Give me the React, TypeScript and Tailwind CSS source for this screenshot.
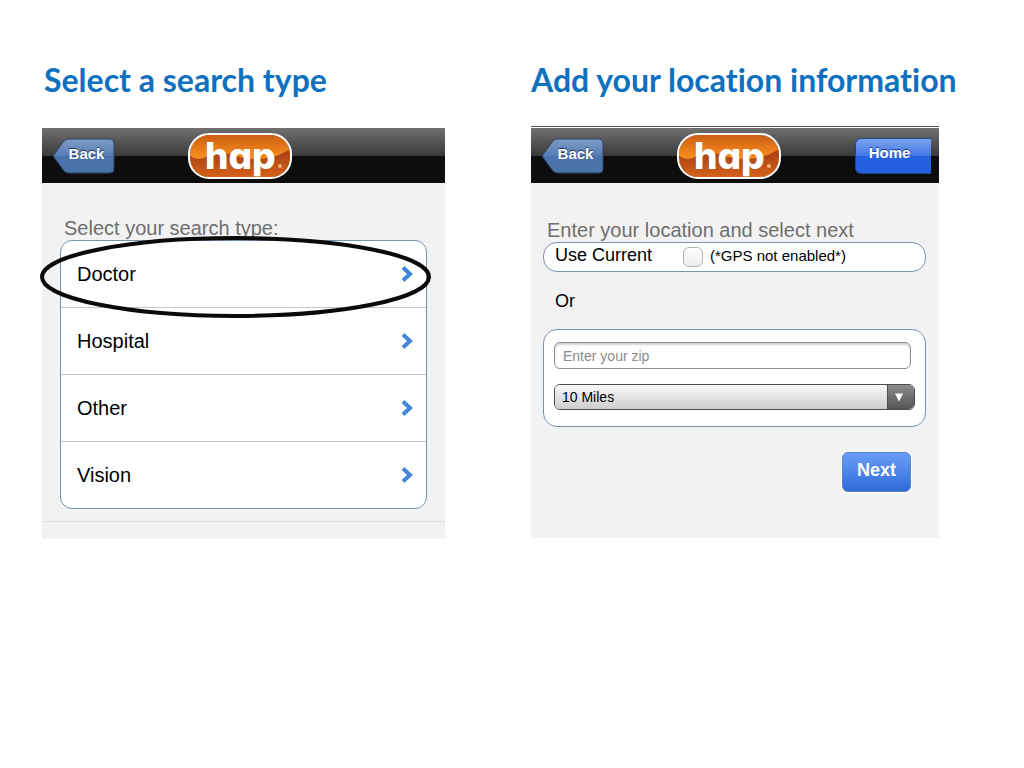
import React, { useId } from "react";

const searchTypes = ["Doctor", "Hospital", "Other", "Vision"];

const distances = ["10 Miles", "25 Miles", "50 Miles"];

const Logo = () => {
  const id = useId();

  return (
    <svg
      className="shrink-0 overflow-visible"
      width="104"
      height="46"
      viewBox="0 0 104 46"
      role="img"
      aria-label="hap"
    >
      <defs>
        <linearGradient id={`${id}-top`} x1="0" y1="0" x2="0" y2="1">
          <stop offset="0" stopColor="#c85a14" />
          <stop offset="0.5" stopColor="#f58a1c" />
          <stop offset="1" stopColor="#f58a1c" />
        </linearGradient>
        <linearGradient id={`${id}-bottom`} x1="0" y1="0" x2="0" y2="1">
          <stop offset="0" stopColor="#a03c14" />
          <stop offset="1" stopColor="#d9641a" />
        </linearGradient>
        <clipPath id={`${id}-clip`}>
          <rect x="2" y="2" width="100" height="42" rx="19" />
        </clipPath>
      </defs>
      <g clipPath={`url(#${id}-clip)`}>
        <rect width="104" height="46" fill={`url(#${id}-top)`} />
        <path
          d="M0 21Q9 30 20 23Q31 17 45 22Q62 28 80 25Q92 23 104 15V46H0Z"
          fill={`url(#${id}-bottom)`}
        />
      </g>
      <rect
        x="1"
        y="1"
        width="102"
        height="44"
        rx="20"
        fill="none"
        stroke="#ffffff"
        strokeWidth="2"
      />
      <text
        x="17"
        y="36"
        fontFamily="Inter, sans-serif"
        fontSize="37"
        fontWeight="800"
        fill="#ffffff"
        style={{ fontFeatureSettings: '"cv11"' }}
      >
        hap
      </text>
      <circle cx="92" cy="33" r="2" fill="#f0b070" />
    </svg>
  );
};

const BackButton = () => {
  const id = useId();

  return (
    <button
      type="button"
      className="relative h-9 w-[63px] shrink-0 pb-1 pl-[6px] text-center text-[15px] leading-8 font-bold text-white text-shadow-[0_-1px_1px_#1f3354]"
    >
      <svg
        className="absolute inset-0"
        width="63"
        height="36"
        viewBox="0 0 63 36"
        aria-hidden="true"
      >
        <defs>
          <linearGradient id={id} x1="0" y1="0" x2="0" y2="1">
            <stop offset="0" stopColor="#7f9cc6" />
            <stop offset="0.5" stopColor="#557cb3" />
            <stop offset="0.5" stopColor="#4a72ac" />
            <stop offset="1" stopColor="#4b72aa" />
          </linearGradient>
        </defs>
        <path
          d="M1 18L12 3Q14 1 17 1H58Q62 1 62 5V31Q62 35 58 35H17Q14 35 12 33Z"
          fill={`url(#${id})`}
          stroke="#2f4263"
          strokeWidth="1"
        />
      </svg>
      <span className="relative">Back</span>
    </button>
  );
};

const HeaderBar = ({ children }: { children?: React.ReactNode }) => (
  <header className="flex h-[55px] items-center gap-[73px] bg-[linear-gradient(#707070_0%,#3a3a3a_50%,#0d0d0d_50%,#0d0d0d_100%)] pr-2 pl-[10px]">
    <BackButton />
    <Logo />
    {children}
  </header>
);

const Chevron = () => (
  <svg width="12" height="16" viewBox="0 0 12 16" aria-hidden="true">
    <path d="M2 1.5L9 8L2 14.5" fill="none" stroke="#4285dc" strokeWidth="4" />
  </svg>
);

const SearchTypeScreen = () => (
  <div className="bg-[#f2f2f2]">
    <HeaderBar />
    <div className="px-[18px] pt-[33px] pb-3">
      <h2 className="px-1 text-[20px] leading-6 text-[#6e6e6e]">
        Select your search type:
      </h2>
      <div className="relative">
        <ul className="divide-y divide-[#c4c8cd] overflow-hidden rounded-xl border border-[#7d90b0] bg-white">
          {searchTypes.map((type) => (
            <li key={type}>
              <a
                href="#"
                className="flex h-[66px] items-center justify-between pr-[13px] pl-4 text-[20px] text-black"
              >
                {type}
                <Chevron />
              </a>
            </li>
          ))}
        </ul>
        {/* Highlight around the first option */}
        <svg
          className="pointer-events-none absolute -top-1 -left-5 h-[82px] w-[calc(100%+24px)]"
          viewBox="0 0 390 82"
          preserveAspectRatio="none"
          aria-hidden="true"
        >
          <ellipse
            cx="195"
            cy="41"
            rx="193"
            ry="39"
            fill="none"
            stroke="#0a0a0a"
            strokeWidth="4"
          />
        </svg>
      </div>
    </div>
    <div className="h-[18px] border-t border-[#dedede]" />
  </div>
);

const LocationScreen = () => (
  <div className="border-t border-[#4a5a4e] bg-[#f2f2f2]">
    <div className="border-t border-white">
      <HeaderBar>
        <button
          type="button"
          className="ml-auto h-9 w-[76px] rounded-l-md border border-r-0 border-[#25477f] bg-[linear-gradient(#7ba3ee_0%,#4277e4_50%,#2461de_50%,#2560dc_100%)] pr-2 pb-1 text-[15px] font-bold text-white text-shadow-[0_-1px_1px_#183a86]"
        >
          Home
        </button>
      </HeaderBar>
    </div>
    <form className="pt-[35px] pr-[13px] pb-[46px] pl-3">
      <h2 className="px-1 text-[20px] leading-6 text-[#6e6e6e]">
        Enter your location and select next
      </h2>
      <div className="flex h-[30px] items-center rounded-[14px] border border-[#7d90b0] bg-white pl-[11px] text-black">
        <label htmlFor="use-current" className="w-[128px] pb-1 text-[18px] leading-6">
          Use Current
        </label>
        <input
          id="use-current"
          type="checkbox"
          className="size-5 appearance-none rounded-md border border-[#b4b4b4] bg-linear-to-b from-white to-[#ececec]"
        />
        <span className="ml-[7px] pb-0.5 text-[15px]">(*GPS not enabled*)</span>
      </div>
      <p className="pt-[17px] pb-4 pl-3 text-[18px] leading-6 text-black">Or</p>
      <div className="rounded-[14px] border border-[#7d90b0] bg-white px-[10px] pt-3 pb-4">
        <div className="pr-1">
          <input
            type="text"
            aria-label="Zip code"
            placeholder="Enter your zip"
            className="block h-[27px] w-full rounded-md border border-[#8e8e8e] bg-white px-2 text-[14px] text-black shadow-[inset_0_2px_2px_#d4d4d4] placeholder:text-[#8c8c8c]"
          />
        </div>
        <div className="relative mt-[15px] overflow-hidden rounded-md border border-[#4c4c4c]">
          <select
            aria-label="Distance"
            className="block h-6 w-full appearance-none bg-linear-to-b from-[#fafafa] to-[#cdcdcd] pl-[7px] text-[14px] text-black"
          >
            {distances.map((distance) => (
              <option key={distance}>{distance}</option>
            ))}
          </select>
          <span className="pointer-events-none absolute inset-y-0 right-0 flex w-[27px] items-center justify-center border-l border-[#4c4c4c] bg-linear-to-b from-[#8c8c8c] to-[#555555] pr-1">
            <svg width="10" height="9" viewBox="0 0 10 9" aria-hidden="true">
              <path d="M1 0.5H9L5 8.5Z" fill="#ffffff" />
            </svg>
          </span>
        </div>
      </div>
      <div className="flex justify-end pt-[25px] pr-[15px]">
        <button
          type="submit"
          className="h-10 w-[69px] rounded-md border border-[#5a83c8] bg-linear-to-b from-[#6a9ef5] to-[#2f6adb] pb-1 text-[18px] font-bold text-white shadow-[0_1px_1px_1px_#ffffff]"
        >
          Next
        </button>
      </div>
    </form>
  </div>
);

const App = () => {
  return (
    <main className="min-h-screen bg-white pt-[60px] pr-[85px] pl-[42px] font-['Liberation_Sans',Arial,sans-serif]">
      <div className="grid grid-cols-1 items-start gap-x-[86px] gap-y-10 md:grid-cols-[403fr_408fr]">
        <section className="min-w-0">
          <h1 className="pb-7 pl-[2px] font-[Lato,sans-serif] text-[32px] leading-10 font-bold whitespace-nowrap text-[#0f70bd] [font-variant-ligatures:none]">
            Select a search type
          </h1>
          <SearchTypeScreen />
        </section>
        <section className="min-w-0">
          <h1 className="pb-[26px] font-[Lato,sans-serif] text-[32px] leading-10 font-bold whitespace-nowrap text-[#0f70bd] [font-variant-ligatures:none]">
            Add your location information
          </h1>
          <LocationScreen />
        </section>
      </div>
    </main>
  );
};

export default App;
